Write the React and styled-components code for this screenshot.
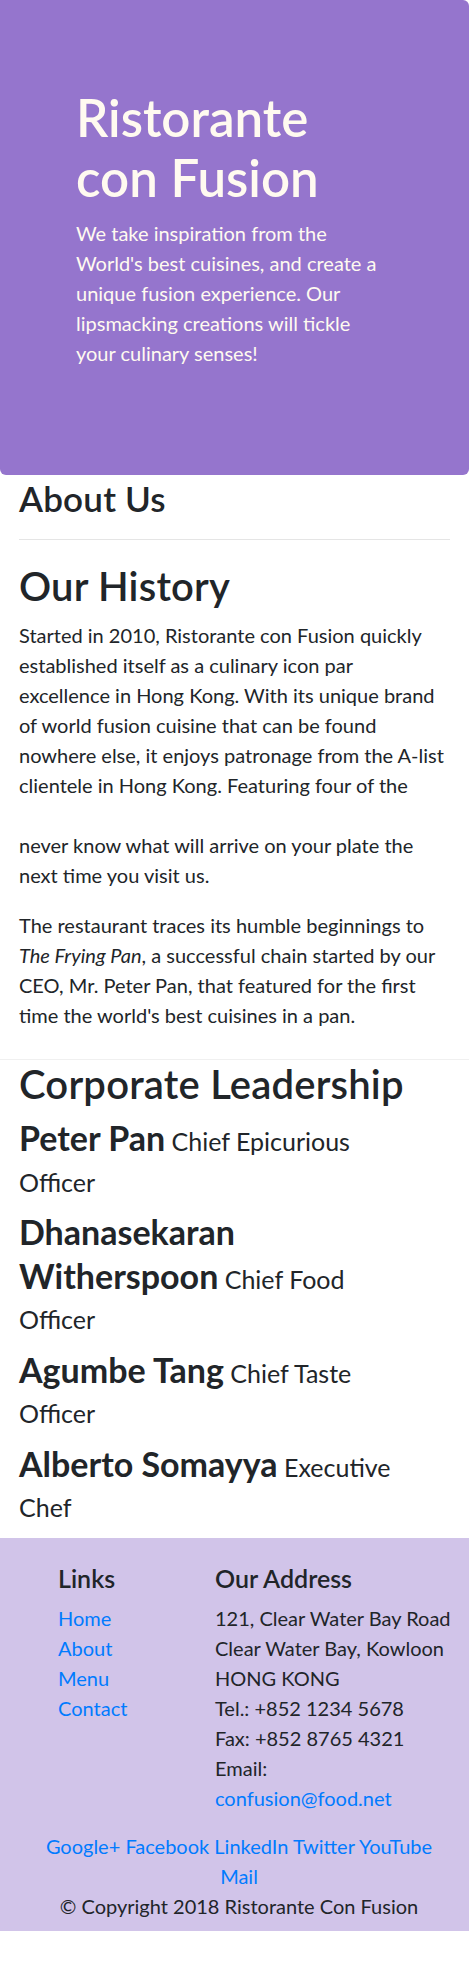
import styled, { createGlobalStyle } from 'styled-components'

const GlobalStyle = createGlobalStyle`
    html, body {
        margin: 0;
        padding: 0;
        background: #fff;
    }
    body {
        font-family: Lato, "Open Sans", sans-serif;
        font-size: 20px;
        line-height: 1.5;
        color: #212529;
    }
    * {
        box-sizing: border-box;
    }
`

const Jumbotron = styled.header`
    height: 475px;
    padding: 88px 0 0 76px;
    background-color: #9575cd;
    border-radius: 0 6px 6px 6px;
    color: floralwhite;
`

const JumboTitle = styled.h1`
    margin: 0 0 10px;
    max-width: 280px;
    font-size: 51px;
    font-weight: 600;
    line-height: 60px;
`

const Lead = styled.p`
    margin: 0;
    max-width: 312px;
    font-size: 20px;
    line-height: 30px;
`

const Section = styled.section`
    padding: 0 19px;
`

const Heading = styled.h2`
    margin: ${({ $top }) => $top || 0}px 0 10px;
    font-size: ${({ $size }) => $size || 40}px;
    font-weight: 600;
    line-height: 1.2;
    letter-spacing: 0.2px;
`

const Rule = styled.hr`
    margin: 20px 0 22px;
    border: 0;
    border-top: 1px solid rgba(0, 0, 0, 0.1);
`

const Paragraph = styled.p`
    margin: 0 0 20px;
    line-height: 30px;
    white-space: nowrap;
`

const Divider = styled.div`
    margin-top: 29px;
    height: 1px;
    background-color: rgba(0, 0, 0, 0.06);
`

const LeaderList = styled.div`
    display: flex;
    flex-direction: column;
    gap: 10px;
    padding-bottom: 9px;
`

const Leader = styled.div`
    font-size: 25px;
    line-height: 40.5px;
    white-space: pre-line;
`

const LeaderName = styled.span`
    font-size: 34px;
    font-weight: 700;
`

const Footer = styled.footer`
    margin-top: 1px;
    padding: 25px 10px 10px 19px;
    background-color: #d1c4e9;
`

const FooterGrid = styled.div`
    display: grid;
    grid-template-columns: 157px 1fr;
    padding-left: 39px;
`

const ColTitle = styled.h5`
    margin: 0 0 10px;
    font-size: 25px;
    font-weight: 600;
    line-height: 30px;
`

const LinkList = styled.ul`
    margin: 0;
    padding: 0;
    list-style: none;
    line-height: 30px;
`

const Link = styled.a`
    color: #007bff;
    text-decoration: none;
`

const Address = styled.address`
    margin: 0 0 18px;
    font-style: normal;
    line-height: 30px;
    white-space: nowrap;
`

const Social = styled.div`
    max-width: 400px;
    margin: 0 auto;
    text-align: center;
    line-height: 30px;
`

const Copyright = styled.p`
    margin: 0;
    text-align: center;
    line-height: 30px;
`

const leaders = [
    { name: 'Peter Pan', role: 'Chief Epicurious\nOfficer' },
    { name: 'Dhanasekaran\nWitherspoon', role: 'Chief Food\nOfficer' },
    { name: 'Agumbe Tang', role: 'Chief Taste\nOfficer' },
    { name: 'Alberto Somayya', role: 'Executive\nChef' },
]

const pages = ['Home', 'About', 'Menu', 'Contact']
const networks = ['Google+', 'Facebook', 'LinkedIn', 'Twitter', 'YouTube', 'Mail']

function App() {
    return (
        <>
            <GlobalStyle />
            <Jumbotron>
                <JumboTitle>Ristorante con Fusion</JumboTitle>
                <Lead>
                    We take inspiration from the World's best cuisines, and create a unique fusion
                    experience. Our lipsmacking creations will tickle your culinary senses!
                </Lead>
            </Jumbotron>

            <Section>
                <Heading as="h3" $size={35} $top={2}>About Us</Heading>
                <Rule />
                <Heading>Our History</Heading>
                <Paragraph>
                    Started in 2010, Ristorante con Fusion quickly<br />
                    established itself as a culinary icon par<br />
                    excellence in Hong Kong. With its unique brand<br />
                    of world fusion cuisine that can be found<br />
                    nowhere else, it enjoys patronage from the A-list<br />
                    clientele in Hong Kong. Featuring four of the<br />
                    <br />
                    never know what will arrive on your plate the<br />
                    next time you visit us.
                </Paragraph>
                <Paragraph>
                    The restaurant traces its humble beginnings to<br />
                    <em>The Frying Pan</em>, a successful chain started by our<br />
                    CEO, Mr. Peter Pan, that featured for the first<br />
                    time the world's best cuisines in a pan.
                </Paragraph>
            </Section>

            <Divider />

            <Section>
                <Heading>Corporate Leadership</Heading>
                <LeaderList>
                    {leaders.map((l) => (
                        <Leader key={l.name}>
                            <LeaderName>{l.name}</LeaderName> {l.role}
                        </Leader>
                    ))}
                </LeaderList>
            </Section>

            <Footer>
                <FooterGrid>
                    <div>
                        <ColTitle>Links</ColTitle>
                        <LinkList>
                            {pages.map((p) => (
                                <li key={p}><Link href="#">{p}</Link></li>
                            ))}
                        </LinkList>
                    </div>
                    <div>
                        <ColTitle>Our Address</ColTitle>
                        <Address>
                            121, Clear Water Bay Road<br />
                            Clear Water Bay, Kowloon<br />
                            HONG KONG<br />
                            Tel.: +852 1234 5678<br />
                            Fax: +852 8765 4321<br />
                            Email:<br />
                            <Link href="#">confusion@food.net</Link>
                        </Address>
                    </div>
                </FooterGrid>
                <Social>
                    {networks.map((n, i) => (
                        <span key={n}>
                            {i > 0 && ' '}
                            <Link href="#">{n}</Link>
                        </span>
                    ))}
                </Social>
                <Copyright>© Copyright 2018 Ristorante Con Fusion</Copyright>
            </Footer>
        </>
    )
}

export default App
